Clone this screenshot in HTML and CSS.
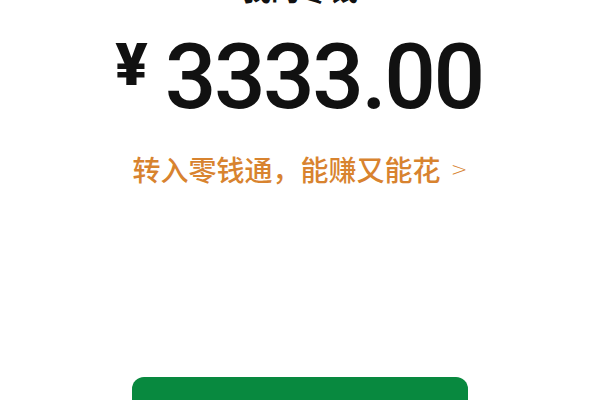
FILE: index.html
```html
<!DOCTYPE html>
<html>
<head>
    <title>我的零钱</title>
    <link rel="stylesheet" href="styles.css">
</head>
<body>
    <div class="wallet">
        <!-- Title -->
        <h1 class="title">我的零钱</h1>

        <!-- Balance -->
        <div class="balance">
            <span class="currency">¥</span>
            <span class="amount">3333.00</span>
        </div>

        <!-- Promo link -->
        <a class="promo" href="#">转入零钱通，能赚又能花<span class="arrow">&gt;</span></a>

        <!-- Main action -->
        <button class="action">充值</button>
    </div>
</body>
</html>
```

FILE: styles.css
```css
body {
    margin: 0;
    background: #ffffff;
    font-family: "Noto Sans CJK SC", "Noto Sans", sans-serif;
    overflow: hidden;
}
.wallet {
    display: flex;
    flex-direction: column;
    align-items: center;
    height: 400px;
}
.title {
    margin: -26px 0 0 0;
    font-size: 29px;
    line-height: 29px;
    font-weight: 700;
    color: #111111;
}
.balance {
    display: flex;
    align-items: flex-start;
    margin-top: 29px;
    margin-left: -2px;
}
.currency {
    font-family: Roboto, "Noto Sans", sans-serif;
    font-size: 60px;
    line-height: 58px;
    font-weight: 900;
    color: #111111;
    margin-top: 4px;
    margin-right: 17px;
}
.amount {
    font-family: Roboto, "Noto Sans", sans-serif;
    font-size: 91px;
    line-height: 91px;
    font-weight: 500;
    letter-spacing: -2.5px;
    color: #111111;
}
.promo {
    margin-top: 32px;
    font-size: 28px;
    line-height: 28px;
    font-weight: 500;
    color: #d8832f;
    text-decoration: none;
    display: flex;
    align-items: center;
}
.arrow {
    font-family: "DejaVu Sans", sans-serif;
    font-size: 20px;
    font-weight: 300;
    margin-left: 10px;
}
.action {
    margin-top: 194px;
    width: 336px;
    height: 100px;
    padding-top: 40px;
    border: none;
    border-radius: 12px;
    background: #08893f;
    color: white;
    font-size: 18px;
    flex-shrink: 0;
}
```
